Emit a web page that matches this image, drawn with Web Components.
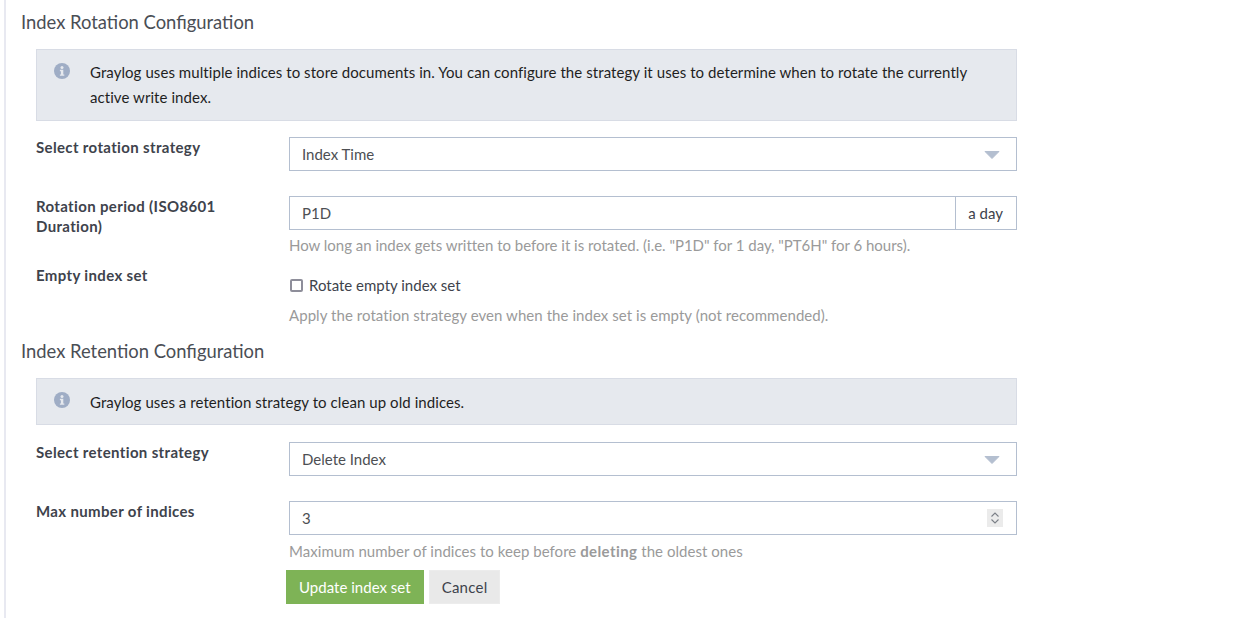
<!DOCTYPE html>
<html>
<head>
<meta charset="utf-8">
<title>Index set</title>
<style>
  html, body { margin: 0; background: #fff; overflow: hidden; }
  body { font-family: Lato, "Noto Sans", sans-serif; font-size: 15px; color: #1f1f1f; }
</style>
</head>
<body>
<index-set-form></index-set-form>

<script>
class GlAlert extends HTMLElement {
  constructor() {
    super();
    this.attachShadow({ mode: 'open' });
    this.shadowRoot.innerHTML = `
      <style>
        :host {
          display: flex;
          margin: 0 0 16px 15px;
          width: 981px;
          box-sizing: border-box;
          padding: 10px 15px 10px 17px;
          background: #e6e9ee;
          border: 1px solid #d8dce5;
          line-height: 25px;
          letter-spacing: 0.07px;
          color: #1f1f1f;
        }
        :host([compact]) { padding-top: 11px; padding-bottom: 9px; margin-bottom: 17px; }
        :host([compact]) svg { margin-top: 2px; }
        svg { width: 16px; height: 16px; margin: 3px 20px 0 0; flex: none; }
        .text { flex: 1; padding-right: 30px; }
      </style>
      <svg viewBox="0 0 16 16">
        <circle cx="8" cy="8" r="8" fill="#9fadc5"/>
        <circle cx="8" cy="4.4" r="1.5" fill="#e6e9ee"/>
        <path d="M5.9 6.8h3.4v4.6h1v1.4H5.9v-1.4h1v-3.2h-1z" fill="#e6e9ee"/>
      </svg>
      <div class="text"><slot></slot></div>
    `;
  }
}

class GlField extends HTMLElement {
  constructor() {
    super();
    this.attachShadow({ mode: 'open' });
    this.shadowRoot.innerHTML = `
      <style>
        :host {
          display: grid;
          grid-template-columns: 253px 728px;
          margin-left: 15px;
          margin-bottom: 25px;
        }
        .label {
          font-weight: 700;
          letter-spacing: 0.35px;
          color: #3e434c;
          line-height: 20px;
          padding-right: 30px;
        }
        ::slotted([slot=help]) { display: block; color: #9a9a9a; margin-top: 5px; line-height: 20px; }
      </style>
      <div class="label">${this.getAttribute('label') || ''}</div>
      <div><slot></slot><slot name="help"></slot></div>
    `;
  }
}

class GlSelect extends HTMLElement {
  constructor() {
    super();
    this.attachShadow({ mode: 'open' });
    this.shadowRoot.innerHTML = `
      <style>
        :host {
          display: flex;
          align-items: center;
          justify-content: space-between;
          box-sizing: border-box;
          height: 34px;
          padding: 0 15px 0 12px;
          border: 1px solid #b4bfd0;
          color: #4d4f53;
          background: #fff;
        }
        svg { width: 18px; height: 10px; margin-top: 1px; display: block; }
      </style>
      <span><slot></slot></span>
      <svg viewBox="0 0 18 10"><path d="M2 1.5h14L9 8.5z" fill="#b4bfd0" stroke="#b4bfd0" stroke-linejoin="round"/></svg>
    `;
  }
}

class GlInput extends HTMLElement {
  constructor() {
    super();
    this.attachShadow({ mode: 'open' });
    const addon = this.getAttribute('addon');
    const spinner = this.hasAttribute('spinner');
    this.shadowRoot.innerHTML = `
      <style>
        :host {
          display: flex;
          box-sizing: border-box;
          height: 34px;
          border: 1px solid #b4bfd0;
          color: #4d4f53;
          background: #fff;
        }
        .value { flex: 1; display: flex; align-items: center; padding: 0 12px; }
        .addon {
          display: flex;
          align-items: center;
          padding: 0 13px 0 12px;
          border-left: 1px solid #b4bfd0;
          color: #3e434c;
        }
        .spin {
          width: 16px; height: 18px;
          align-self: center;
          margin-right: 13px;
          background: #ebebeb;
          display: block;
        }
      </style>
      <div class="value"><slot></slot></div>
      ${addon ? `<div class="addon">${addon}</div>` : ''}
      ${spinner ? `<svg class="spin" viewBox="0 0 16 18" fill="none" stroke="#7b7f87" stroke-width="1.1">
        <path d="M4.5 7.5 8 4l3.5 3.5M4.5 10.5 8 14l3.5-3.5"/></svg>` : ''}
    `;
  }
}

class GlCheckbox extends HTMLElement {
  constructor() {
    super();
    this.attachShadow({ mode: 'open' });
    this.shadowRoot.innerHTML = `
      <style>
        :host { display: flex; align-items: center; height: 20px; margin: 10px 0; color: #3e434c; }
        i {
          width: 13px; height: 13px;
          box-sizing: border-box;
          border: 2px solid #8e8e9a;
          border-radius: 2px;
          margin: 1px 6px 0 1px;
        }
      </style>
      <i></i><span><slot></slot></span>
    `;
  }
}

class GlButton extends HTMLElement {
  constructor() {
    super();
    this.attachShadow({ mode: 'open' });
    this.shadowRoot.innerHTML = `
      <style>
        :host {
          display: inline-flex;
          align-items: center;
          box-sizing: border-box;
          height: 34px;
          padding: 0 12px;
          background: #e9e9e9;
          color: #3e434c;
          border: 1px solid #ececec;
          letter-spacing: 0.25px;
        }
        :host([primary]) {
          background: #7eb356;
          border-color: #7eb356;
          color: #fff;
          letter-spacing: 0.02px;
        }
      </style>
      <slot></slot>
    `;
  }
}

class IndexSetForm extends HTMLElement {
  constructor() {
    super();
    this.attachShadow({ mode: 'open' });
    this.shadowRoot.innerHTML = `
      <style>
        :host {
          display: block;
          margin-left: 4px;
          border-left: 2px solid #e8e9f1;
          padding-left: 15px;
          height: 618px;
          box-sizing: border-box;
        }
        h2 {
          font-weight: 400;
          font-size: 18.4px;
          line-height: 22px;
          color: #4a4e55;
          margin: 0 0 16px;
        }
        .first { padding-top: 11px; }
        .tight { margin-bottom: 10px; }
        .last { margin-bottom: 15px; }
        .max { margin-bottom: 9px; }
        .actions { display: flex; gap: 5px; margin: 0 0 0 265px; }
        b { letter-spacing: 0.4px; }
      </style>
      <div class="first"><h2>Index Rotation Configuration</h2></div>
      <gl-alert>Graylog uses multiple indices to store documents in. You can configure the strategy it uses to determine when to rotate the currently active write index.</gl-alert>
      <gl-field label="Select rotation strategy"><gl-select>Index Time</gl-select></gl-field>
      <gl-field label="Rotation period (ISO8601 Duration)" class="tight">
        <gl-input addon="a day">P1D</gl-input>
        <span slot="help" style="letter-spacing:-0.02px">How long an index gets written to before it is rotated. (i.e. "P1D" for 1 day, "PT6H" for 6 hours).</span>
      </gl-field>
      <gl-field label="Empty index set" class="last">
        <gl-checkbox>Rotate empty index set</gl-checkbox>
        <span slot="help" style="letter-spacing:0.06px">Apply the rotation strategy even when the index set is empty (not recommended).</span>
      </gl-field>
      <h2>Index Retention Configuration</h2>
      <gl-alert compact>Graylog uses a retention strategy to clean up old indices.</gl-alert>
      <gl-field label="Select retention strategy"><gl-select>Delete Index</gl-select></gl-field>
      <gl-field label="Max number of indices" class="max">
        <gl-input spinner>3</gl-input>
        <span slot="help" style="margin-top:6px;letter-spacing:0.04px">Maximum number of indices to keep before <b>deleting</b> the oldest ones</span>
      </gl-field>
      <div class="actions">
        <gl-button primary>Update index set</gl-button>
        <gl-button>Cancel</gl-button>
      </div>
    `;
  }
}

customElements.define('gl-alert', GlAlert);
customElements.define('gl-field', GlField);
customElements.define('gl-select', GlSelect);
customElements.define('gl-input', GlInput);
customElements.define('gl-checkbox', GlCheckbox);
customElements.define('gl-button', GlButton);
customElements.define('index-set-form', IndexSetForm);
</script>
</body>
</html>
